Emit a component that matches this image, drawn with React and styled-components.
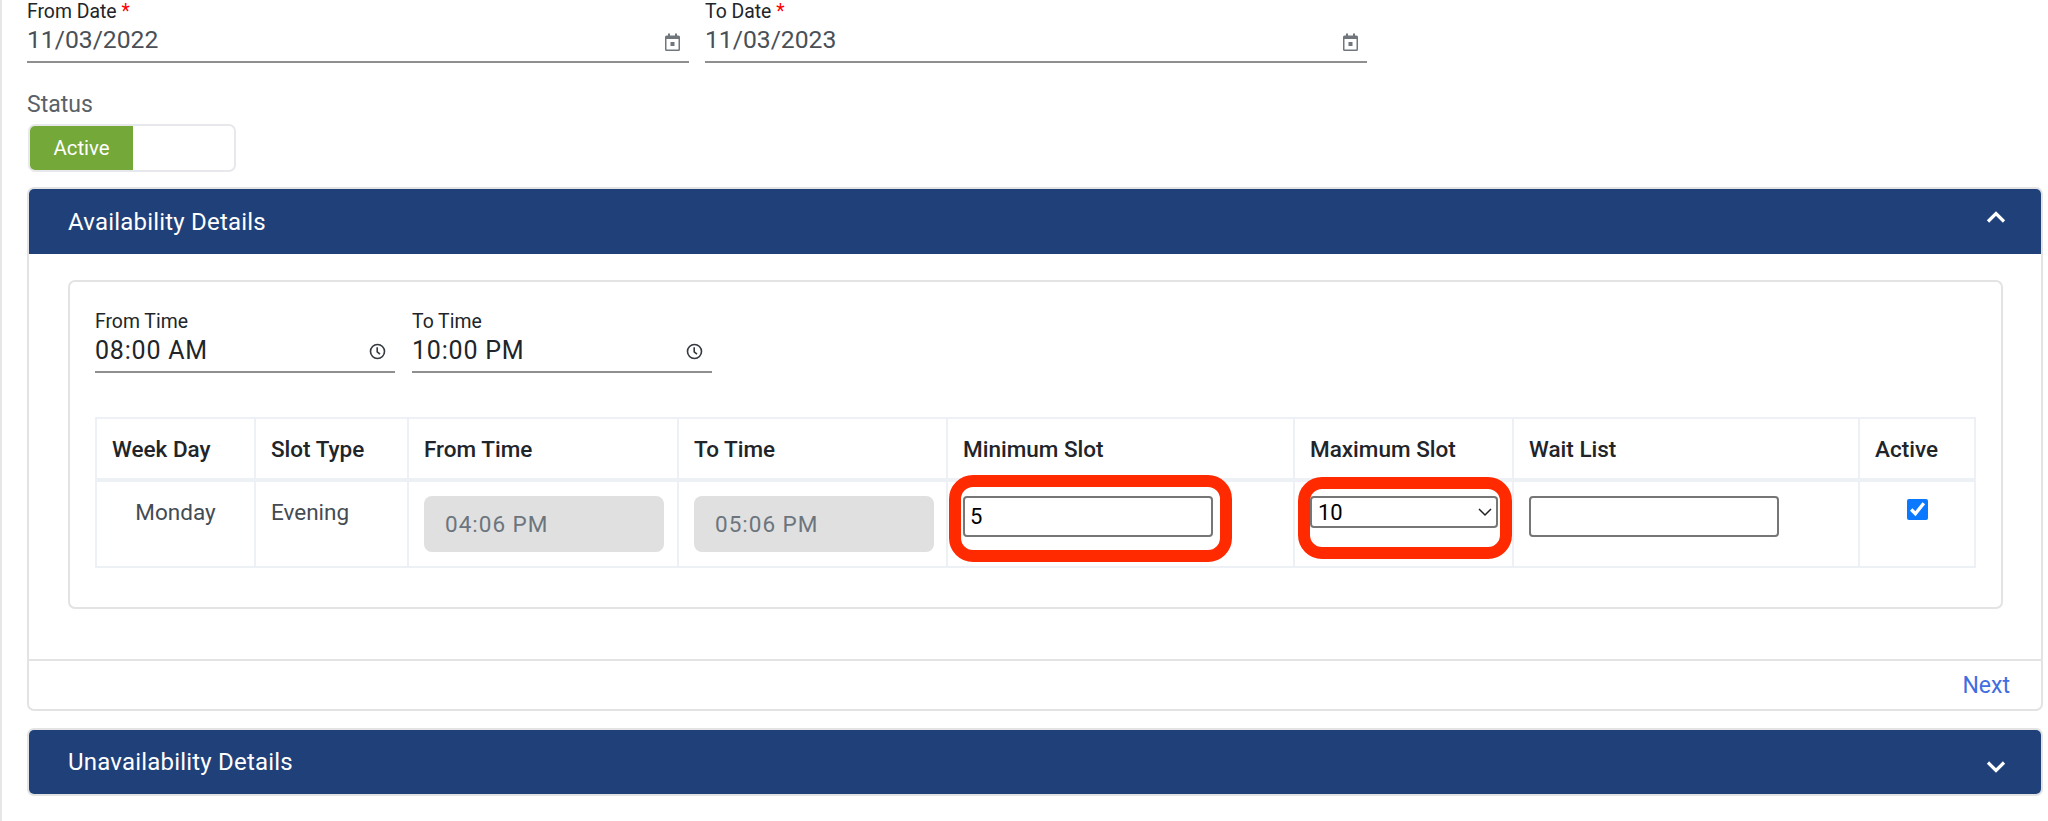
import React from "react";
import styled, { createGlobalStyle } from "styled-components";

const GlobalStyle = createGlobalStyle`
    html, body {
        margin: 0;
        background: #fff;
    }
    body {
        font-family: Roboto, "Liberation Sans", sans-serif;
        color: #212529;
    }
`;

const Page = styled.div`
    border-left: 2px solid #e6e6e6;
    padding: 0 5px 28px 25px;
    min-height: 793px;
`;

const DateRow = styled.div`
    display: flex;
    gap: 16px;
`;

const DateField = styled.div`
    width: 662px;
`;

const Label = styled.div`
    font-size: 19.4px;
    line-height: 24px;
    color: #212529;
`;

const Required = styled.span`
    color: #f00;
`;

const LineInput = styled.div`
    height: 37px;
    box-sizing: content-box;
    border-bottom: 2px solid #8f8f8f;
    display: flex;
    align-items: center;
    justify-content: space-between;
    padding-right: 9px;
    font-size: ${props => props.$size}px;
    color: ${props => props.$color};
    letter-spacing: ${props => props.$spacing || 0}px;
    line-height: 32px;
`;

const LineValue = styled.span`
    margin-bottom: ${props => props.$lift}px;
`;

const LineIcon = styled.svg`
    margin-bottom: 2px;
`;

const StatusLabel = styled.div`
    margin-top: 30px;
    font-size: 23px;
    line-height: 24px;
    color: #5a6168;
`;

const Toggle = styled.div`
    margin: 7px 0 0 1px;
    width: 208px;
    height: 48px;
    box-sizing: border-box;
    border: 2px solid #e6e8ec;
    border-radius: 7px;
    overflow: hidden;
    display: flex;
`;

const ToggleOn = styled.div`
    width: 103px;
    background: #74a839;
    color: #fff;
    font-size: 20.4px;
    display: flex;
    align-items: center;
    justify-content: center;
`;

const Panel = styled.section`
    margin-top: ${props => props.$top}px;
    border: 2px solid #e3e3e3;
    border-radius: 7px;
    overflow: hidden;
`;

const PanelHeader = styled.div`
    height: ${props => props.$height}px;
    background: #204079;
    color: #fff;
    font-size: 24px;
    letter-spacing: 0.2px;
    display: flex;
    align-items: center;
    justify-content: space-between;
    padding: 0 35px 0 39px;
`;

const PanelBody = styled.div`
    padding: 26px 38px 50px 39px;
`;

const Card = styled.div`
    border: 2px solid #e3e3e3;
    border-radius: 7px;
    padding: 28px 25px 39px 25px;
`;

const TimeRow = styled.div`
    display: flex;
    gap: 17px;
    margin-bottom: 44px;
`;

const TimeField = styled.div`
    width: 300px;
`;

const Table = styled.table`
    width: 1879px;
    table-layout: fixed;
    border-collapse: collapse;
`;

const Col = styled.col`
    width: ${props => props.$w}px;
`;

const Th = styled.th`
    height: 62px;
    padding: 0 15px;
    box-sizing: border-box;
    border: 2px solid #edf0f4;
    border-bottom-width: 4px;
    font-size: 22.5px;
    font-weight: 500;
    text-align: left;
    color: #212529;
`;

const Td = styled.td`
    height: 87px;
    padding: ${props => props.$top || 14}px 15px 0;
    box-sizing: border-box;
    border: 2px solid #edf0f4;
    vertical-align: top;
    font-size: 22.5px;
    line-height: 24px;
    color: #444b52;
    text-align: ${props => (props.$center ? "center" : "left")};
`;

const LockedInput = styled.input`
    width: 240px;
    height: 56px;
    box-sizing: border-box;
    border: 0;
    border-radius: 8px;
    background: #e0e0e0;
    padding: 0 21px;
    font-family: inherit;
    font-size: 22.5px;
    letter-spacing: 1px;
    color: #6c757d;
`;

const Marked = styled.div`
    position: relative;
    width: ${props => props.$w}px;
`;

const Highlight = styled.div`
    position: absolute;
    inset: ${props => props.$inset};
    border: 12px solid #ff2a00;
    border-radius: 24px;
    pointer-events: none;
`;

const SlotInput = styled.input`
    display: block;
    width: ${props => props.$w}px;
    height: 41px;
    box-sizing: border-box;
    border: 2px solid #767676;
    border-radius: 4px;
    padding: 0 5px;
    background: #fff;
    font-family: inherit;
    font-size: 22px;
    color: #000;
`;

const SlotSelect = styled.select`
    display: block;
    width: 188px;
    height: 32px;
    box-sizing: border-box;
    border: 2px solid #767676;
    border-radius: 4px;
    padding: 0 6px;
    background: #fff;
    font-family: inherit;
    font-size: 22px;
    color: #000;
    appearance: none;
`;

const SelectArrow = styled.svg`
    position: absolute;
    top: 11px;
    right: 6px;
    width: 14px;
    height: 10px;
    pointer-events: none;
`;

const Check = styled.input`
    width: 21px;
    height: 21px;
    margin: 0;
    accent-color: #0a78ff;
`;

const Footer = styled.div`
    height: 48px;
    border-top: 2px solid #e3e3e3;
    display: flex;
    align-items: center;
    justify-content: flex-end;
    padding-right: 31px;
`;

const NextLink = styled.a`
    color: #3f6ee0;
    font-size: 23px;
    cursor: pointer;
`;

const ChevronMark = styled.svg`
    margin: ${props => (props.$up ? "0 0 9px" : "10px 0 0")};
`;

const CalendarIcon = () => (
    <LineIcon width="15" height="18" viewBox="0 0 15 18" fill="none">
        <path d="M3 0.5h2v2h5v-2h2v2h1.5A1.5 1.5 0 0 1 15 4v12.5a1.5 1.5 0 0 1-1.5 1.5h-12A1.5 1.5 0 0 1 0 16.5V4a1.5 1.5 0 0 1 1.5-1.5H3z" fill="#70767c" />
        <rect x="1.5" y="6" width="12" height="10.5" fill="#fff" />
        <rect x="5.5" y="9" width="4" height="4" fill="#70767c" />
    </LineIcon>
);

const ClockIcon = () => (
    <LineIcon width="17" height="17" viewBox="0 0 17 17" fill="none" stroke="#33393f" strokeWidth="1.6">
        <circle cx="8.5" cy="8.5" r="7" />
        <path d="M8.2 4.2v4.6l2.8 2.4" />
    </LineIcon>
);

const Chevron = ({ up }) => (
    <ChevronMark $up={up} width="20" height="12" viewBox="0 0 20 12" fill="none" stroke="#fff" strokeWidth="3.2">
        <path d={up ? "M2 10.5l8-8 8 8" : "M2 1.5l8 8 8-8"} />
    </ChevronMark>
);

const slots = [
    { from: "04:06 PM", to: "05:06 PM" },
];

const App = () => (
    <>
        <GlobalStyle />
        <Page>
            <DateRow>
                <DateField>
                    <Label>From Date <Required>*</Required></Label>
                    <LineInput $size={24.7} $color="#495057">
                        <LineValue $lift={5}>11/03/2022</LineValue>
                        <CalendarIcon />
                    </LineInput>
                </DateField>
                <DateField>
                    <Label>To Date <Required>*</Required></Label>
                    <LineInput $size={24.7} $color="#495057">
                        <LineValue $lift={5}>11/03/2023</LineValue>
                        <CalendarIcon />
                    </LineInput>
                </DateField>
            </DateRow>

            <StatusLabel>Status</StatusLabel>
            <Toggle>
                <ToggleOn>Active</ToggleOn>
            </Toggle>

            <Panel $top={15}>
                <PanelHeader $height={65}>
                    Availability Details
                    <Chevron up />
                </PanelHeader>
                <PanelBody>
                    <Card>
                        <TimeRow>
                            <TimeField>
                                <Label>From Time</Label>
                                <LineInput $color="#212529" $spacing={0.8} $size={25}>
                                    <LineValue $lift={4}>08:00 AM</LineValue>
                                    <ClockIcon />
                                </LineInput>
                            </TimeField>
                            <TimeField>
                                <Label>To Time</Label>
                                <LineInput $color="#212529" $spacing={0.8} $size={25}>
                                    <LineValue $lift={4}>10:00 PM</LineValue>
                                    <ClockIcon />
                                </LineInput>
                            </TimeField>
                        </TimeRow>
                        <Table>
                            <colgroup>
                                <Col $w={159} />
                                <Col $w={153} />
                                <Col $w={270} />
                                <Col $w={269} />
                                <Col $w={347} />
                                <Col $w={219} />
                                <Col $w={346} />
                                <Col $w={116} />
                            </colgroup>
                            <thead>
                                <tr>
                                    <Th>Week Day</Th>
                                    <Th>Slot Type</Th>
                                    <Th>From Time</Th>
                                    <Th>To Time</Th>
                                    <Th>Minimum Slot</Th>
                                    <Th>Maximum Slot</Th>
                                    <Th>Wait List</Th>
                                    <Th>Active</Th>
                                </tr>
                            </thead>
                            <tbody>
                                {slots.map(slot => (
                                    <tr key={slot.from}>
                                        <Td $center $top={18}>Monday</Td>
                                        <Td $top={18}>Evening</Td>
                                        <Td><LockedInput readOnly value={slot.from} /></Td>
                                        <Td><LockedInput readOnly value={slot.to} /></Td>
                                        <Td>
                                            <Marked $w={250}>
                                                <SlotInput $w={250} defaultValue="5" />
                                                <Highlight $inset="-21px -19px -25px -14px" />
                                            </Marked>
                                        </Td>
                                        <Td>
                                            <Marked $w={188}>
                                                <SlotSelect defaultValue="10">
                                                    <option>5</option>
                                                    <option>10</option>
                                                </SlotSelect>
                                                <SelectArrow viewBox="0 0 14 10" fill="none" stroke="#222" strokeWidth="1.5">
                                                    <path d="M1 2l6 6 6-6" />
                                                </SelectArrow>
                                                <Highlight $inset="-19px -14px -31px -12px" />
                                            </Marked>
                                        </Td>
                                        <Td><SlotInput $w={250} /></Td>
                                        <Td $center $top={17}><Check type="checkbox" defaultChecked /></Td>
                                    </tr>
                                ))}
                            </tbody>
                        </Table>
                    </Card>
                </PanelBody>
                <Footer>
                    <NextLink>Next</NextLink>
                </Footer>
            </Panel>

            <Panel $top={17}>
                <PanelHeader $height={64}>
                    Unavailability Details
                    <Chevron />
                </PanelHeader>
            </Panel>
        </Page>
    </>
);

export default App;
